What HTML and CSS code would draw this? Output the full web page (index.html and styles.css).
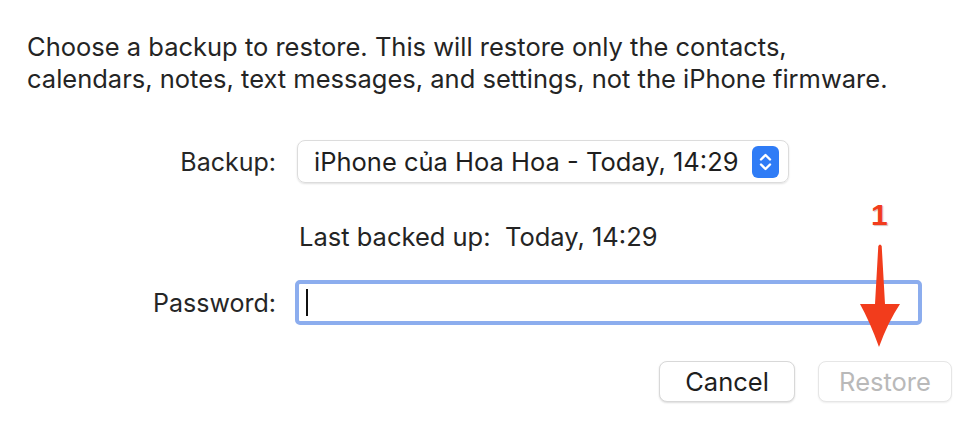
FILE: index.html
```html
<!DOCTYPE html>
<html>
<head>
<meta charset="utf-8">
<link rel="stylesheet" href="styles.css">
</head>
<body>
<div class="sheet">
  <p class="intro">Choose a backup to restore. This will restore only the contacts,<br>calendars, notes, text messages, and settings, not the iPhone firmware.</p>
  <div class="form">
    <div class="row row-backup">
      <span class="label">Backup:</span>
      <div class="popup">
        <span class="popup-text">iPhone của Hoa Hoa - Today, 14:29</span>
        <span class="stepper">
          <svg width="27" height="32" viewBox="0 0 27 32"><path d="M9 13.5 L13.5 9 L18 13.5 M9 18.5 L13.5 23 L18 18.5" fill="none" stroke="#fff" stroke-width="2.4" stroke-linecap="round" stroke-linejoin="round"/></svg>
        </span>
      </div>
    </div>
    <div class="row row-last">
      <span class="label"></span>
      <span class="last">Last backed up:&nbsp;&nbsp;Today, 14:29</span>
    </div>
    <div class="row row-pass">
      <span class="label">Password:</span>
      <div class="field"><span class="caret"></span></div>
    </div>
  </div>
  <div class="buttons">
    <button class="btn">Cancel</button>
    <button class="btn disabled">Restore</button>
  </div>
  <span class="num">1</span>
  <svg class="arrow" width="50" height="110" viewBox="0 0 50 110"><path d="M23.3 6 Q25 3 26.7 6 L30 64 L45 64 Q33 82 24 107 Q15 82 5 64 L20 64 Z" fill="#f23c1c"/></svg>
</div>
</body>
</html>
```
FILE: styles.css
```css
html, body {
  margin: 0;
  padding: 0;
  background: #ffffff;
}
body {
  font-family: Inter, "Liberation Sans", Arial, sans-serif;
  color: #222222;
  width: 980px;
  height: 436px;
  overflow: hidden;
}
.sheet {
  position: relative;
  width: 980px;
  height: 436px;
}
.intro {
  margin: 0;
  padding: 31px 0 0 27px;
  font-size: 25.5px;
  line-height: 32px;
  color: #242424;
}
.form {
  display: flex;
  flex-direction: column;
  margin-top: 45px;
}
.row {
  display: flex;
  align-items: center;
}
.label {
  width: 276px;
  text-align: right;
  font-size: 25px;
  color: #262626;
  flex: none;
}
.popup {
  margin-left: 21px;
  width: 492px;
  height: 43px;
  border: 1px solid #dcdcdc;
  border-radius: 8px;
  box-shadow: 0 1px 2px rgba(0,0,0,0.12);
  display: flex;
  align-items: center;
  justify-content: space-between;
  padding: 0 9px 0 16px;
  box-sizing: border-box;
}
.popup-text {
  font-size: 25.5px;
  color: #1e1e1e;
}
.stepper {
  width: 27px;
  height: 32px;
  background: #2f7cf6;
  border-radius: 6px;
  display: flex;
}
.row-last {
  margin-top: 37px;
  height: 32px;
}
.last {
  margin-left: 23px;
  font-size: 25.5px;
  color: #242424;
}
.row-pass {
  margin-top: 28px;
}
.field {
  margin-left: 19px;
  width: 627px;
  height: 45px;
  box-sizing: border-box;
  border: 4px solid #8cadee;
  border-radius: 5px;
  display: flex;
  align-items: center;
  padding-left: 7px;
}
.caret {
  width: 2px;
  height: 27px;
  background: #111;
}
.buttons {
  display: flex;
  justify-content: flex-end;
  gap: 23px;
  padding-right: 28px;
  margin-top: 36px;
}
.btn {
  width: 136px;
  height: 41px;
  border: 1px solid #d8d8d8;
  border-radius: 8px;
  background: #fff;
  box-shadow: 0 1px 2px rgba(0,0,0,0.14);
  font-family: Inter, "Liberation Sans", Arial, sans-serif;
  font-size: 25.5px;
  color: #1e1e1e;
  padding: 0;
}
.btn.disabled {
  width: 134px;
  color: #b9b9b9;
  border-color: #e6e6e6;
  box-shadow: 0 1px 2px rgba(0,0,0,0.07);
}
.num {
  position: absolute;
  left: 871px;
  top: 200px;
  font-family: "Liberation Sans", Arial, sans-serif;
  font-weight: bold;
  font-size: 30px;
  line-height: 30px;
  color: #f23c1c;
  text-shadow: 1px 1px 1px rgba(120,40,20,0.3);
}
.arrow {
  position: absolute;
  left: 855px;
  top: 240px;
}
```
